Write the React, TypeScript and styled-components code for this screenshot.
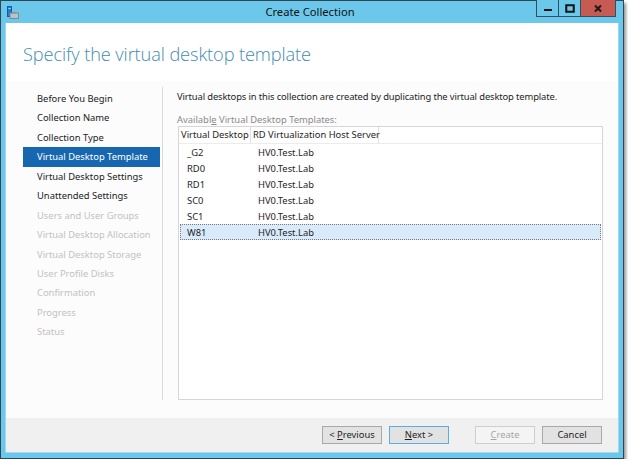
import * as React from 'react';
import styled, { createGlobalStyle } from 'styled-components';

const GlobalStyle = createGlobalStyle`
  html, body {
    margin: 0;
    padding: 0;
    background: #ffffff;
  }
  body {
    font-family: "Segoe UI", "Noto Sans", "Liberation Sans", sans-serif;
    font-size: 9.4px;
    color: #1e1e1e;
  }
`;

const steps = [
  { label: 'Before You Begin', state: 'done' },
  { label: 'Collection Name', state: 'done' },
  { label: 'Collection Type', state: 'done' },
  { label: 'Virtual Desktop Template', state: 'active' },
  { label: 'Virtual Desktop Settings', state: 'done' },
  { label: 'Unattended Settings', state: 'done' },
  { label: 'Users and User Groups', state: 'off' },
  { label: 'Virtual Desktop Allocation', state: 'off' },
  { label: 'Virtual Desktop Storage', state: 'off' },
  { label: 'User Profile Disks', state: 'off' },
  { label: 'Confirmation', state: 'off' },
  { label: 'Progress', state: 'off' },
  { label: 'Status', state: 'off' },
];

const templates = [
  { name: '_G2', host: 'HV0.Test.Lab' },
  { name: 'RD0', host: 'HV0.Test.Lab' },
  { name: 'RD1', host: 'HV0.Test.Lab' },
  { name: 'SC0', host: 'HV0.Test.Lab' },
  { name: 'SC1', host: 'HV0.Test.Lab' },
  { name: 'W81', host: 'HV0.Test.Lab' },
];

const ServerIcon = () => (
  <svg width="12" height="13" viewBox="0 0 12 13">
    <rect x="0.5" y="0.5" width="4" height="10" fill="#1f7fd0" stroke="#125c9c" strokeWidth="1" />
    <rect x="1.5" y="2" width="2" height="1" fill="#bfe3ff" />
    <rect x="3" y="7" width="8.5" height="5.5" fill="#b9c2c8" stroke="#7c8a93" strokeWidth="1" />
    <rect x="5" y="6" width="4.5" height="1.5" fill="#8a979f" />
  </svg>
);

const App = () => {
  return (
    <>
      <GlobalStyle />
      <Window>
        <TitleBar>
          <TitleIcon>
            <ServerIcon />
          </TitleIcon>
          <TitleText>Create Collection</TitleText>
          <Caption>
            <CaptionButton>
              <svg width="10" height="8" viewBox="0 0 10 8">
                <rect x="1" y="5" width="8" height="2" fill="#111" />
              </svg>
            </CaptionButton>
            <CaptionButton>
              <svg width="10" height="9" viewBox="0 0 10 9">
                <rect x="1.25" y="1.25" width="7.5" height="6.5" fill="none" stroke="#111" strokeWidth="2" />
              </svg>
            </CaptionButton>
            <CaptionButton $close>
              <svg width="10" height="9" viewBox="0 0 10 9">
                <path d="M2 1.5 L8 7.5 M8 1.5 L2 7.5" stroke="#1a1a1a" strokeWidth="2" />
              </svg>
            </CaptionButton>
          </Caption>
        </TitleBar>

        <Client>
          <Header>Specify the virtual desktop template</Header>
          <Body>
            <Nav>
              {steps.map((s) => (
                <NavItem key={s.label} $state={s.state}>
                  {s.label}
                </NavItem>
              ))}
            </Nav>
            <Divider />
            <Content>
              <Intro>
                Virtual desktops in this collection are created by duplicating the virtual desktop
                template.
              </Intro>
              <ListLabel>
                Availabl<u>e</u> Virtual Desktop Templates:
              </ListLabel>
              <ListView>
                <ListHeader>
                  <HeaderCell $w={72}>Virtual Desktop</HeaderCell>
                  <HeaderCell $w={128}>RD Virtualization Host Server</HeaderCell>
                  <HeaderFill />
                </ListHeader>
                <Rows>
                  {templates.map((t) => (
                    <Row key={t.name} $selected={t.name === 'W81'}>
                      <NameCell>{t.name}</NameCell>
                      <HostCell>{t.host}</HostCell>
                    </Row>
                  ))}
                </Rows>
              </ListView>
            </Content>
          </Body>
          <Footer>
            <Button>
              &lt; <u>P</u>revious
            </Button>
            <Button $focused>
              <u>N</u>ext &gt;
            </Button>
            <Button $disabled $gap={26}>
              <u>C</u>reate
            </Button>
            <Button>Cancel</Button>
          </Footer>
        </Client>
      </Window>
    </>
  );
};

const Window = styled.div`
  width: 622px;
  height: 457px;
  border: 1px solid #2f4755;
  background: #6bc8ea;
  display: flex;
  flex-direction: column;
  box-shadow: 2px 3px 3px rgba(60, 60, 60, 0.55);
`;

const TitleBar = styled.div`
  height: 22px;
  display: flex;
  align-items: flex-start;
  padding-left: 6px;
`;

const TitleIcon = styled.div`
  margin-top: 5px;
  width: 12px;
  height: 13px;
`;

const TitleText = styled.div`
  flex: 1;
  text-align: center;
  line-height: 22px;
  font-size: 11.2px;
  color: #111;
  padding-left: 64px;
`;

const Caption = styled.div`
  display: flex;
  margin-right: 7px;
  margin-top: -1px;
`;

const CaptionButton = styled.div<{ $close?: boolean }>`
  width: ${(p) => (p.$close ? '36px' : '23px')};
  height: 17px;
  box-sizing: border-box;
  border: 1px solid #30505f;
  border-top: none;
  margin-left: -1px;
  background: ${(p) => (p.$close ? '#c75a52' : '#6bc8ea')};
  display: flex;
  align-items: center;
  justify-content: center;
`;

const Client = styled.div`
  flex: 1;
  margin: 0 4px 5px 4px;
  background: #ffffff;
  display: flex;
  flex-direction: column;
  border: 1px solid #9fd9ef;
  border-top: none;
`;

const Header = styled.div`
  height: 58px;
  box-sizing: border-box;
  padding: 19px 0 0 17px;
  font-family: "Segoe UI Light", "Open Sans", "Noto Sans", sans-serif;
  font-weight: 300;
  font-size: 18.2px;
  color: #3f8db4;
  letter-spacing: -0.1px;
`;

const Body = styled.div`
  flex: 1;
  display: flex;
  background: #fcfcfc;
  padding-bottom: 18px;
`;

const Nav = styled.div`
  width: 137px;
  margin-left: 17px;
  padding-top: 8px;
  display: flex;
  flex-direction: column;
`;

const NavItem = styled.div<{ $state: string }>`
  height: 19.45px;
  line-height: 19px;
  padding-left: 14px;
  white-space: nowrap;
  color: ${(p) => (p.$state === 'active' ? '#ffffff' : p.$state === 'off' ? '#c2c2c2' : '#222')};
  background: ${(p) => (p.$state === 'active' ? '#1767b0' : 'transparent')};
`;

const Divider = styled.div`
  width: 1px;
  background: #d9d9d9;
  margin: 6px 0 0 2px;
`;

const Content = styled.div`
  flex: 1;
  display: flex;
  flex-direction: column;
  padding: 9px 15px 0 14px;
`;

const Intro = styled.div`
  line-height: 14px;
  white-space: nowrap;
  letter-spacing: -0.12px;
`;

const ListLabel = styled.div`
  margin-top: 10px;
  color: #8a8a8a;
  line-height: 12px;

  u {
    text-decoration-thickness: 1px;
  }
`;

const ListView = styled.div`
  flex: 1;
  margin-left: 1px;
  border: 1px solid #d6d6d6;
  background: #ffffff;
  display: flex;
  flex-direction: column;
`;

const ListHeader = styled.div`
  display: flex;
  height: 16px;
  border-bottom: 1px solid #ececec;
`;

const HeaderCell = styled.div<{ $w: number }>`
  width: ${(p) => p.$w}px;
  box-sizing: border-box;
  border-right: 1px solid #e0e0e0;
  line-height: 16px;
  padding-left: 2px;
  white-space: nowrap;
  color: #1e1e1e;
`;

const HeaderFill = styled.div`
  flex: 1;
`;

const Rows = styled.div`
  padding: 0 1px;
  display: flex;
  flex-direction: column;
`;

const Row = styled.div<{ $selected?: boolean }>`
  display: flex;
  height: 16px;
  line-height: 15px;
  box-sizing: border-box;
  background: ${(p) => (p.$selected ? '#d9ebfb' : 'transparent')};
  border: 1px ${(p) => (p.$selected ? 'dotted #7a7a7a' : 'solid transparent')};
`;

const NameCell = styled.div`
  width: 77px;
  padding-left: 6px;
  box-sizing: border-box;
`;

const HostCell = styled.div`
  flex: 1;
`;

const Footer = styled.div`
  height: 34px;
  background: #f0f0f0;
  display: flex;
  align-items: center;
  justify-content: flex-end;
  padding-right: 16px;
`;

const Button = styled.div<{ $focused?: boolean; $disabled?: boolean; $gap?: number }>`
  width: 60px;
  height: 18px;
  box-sizing: border-box;
  margin-left: ${(p) => (p.$gap ? p.$gap : 7)}px;
  border: 1px solid ${(p) => (p.$focused ? '#5aaee8' : p.$disabled ? '#cfcfcf' : '#a8a8a8')};
  background: ${(p) => (p.$disabled ? '#f4f4f4' : '#e2e2e2')};
  color: ${(p) => (p.$disabled ? '#a6a6a6' : '#1e1e1e')};
  text-align: center;
  line-height: 16px;
  white-space: nowrap;
`;

export default App;
